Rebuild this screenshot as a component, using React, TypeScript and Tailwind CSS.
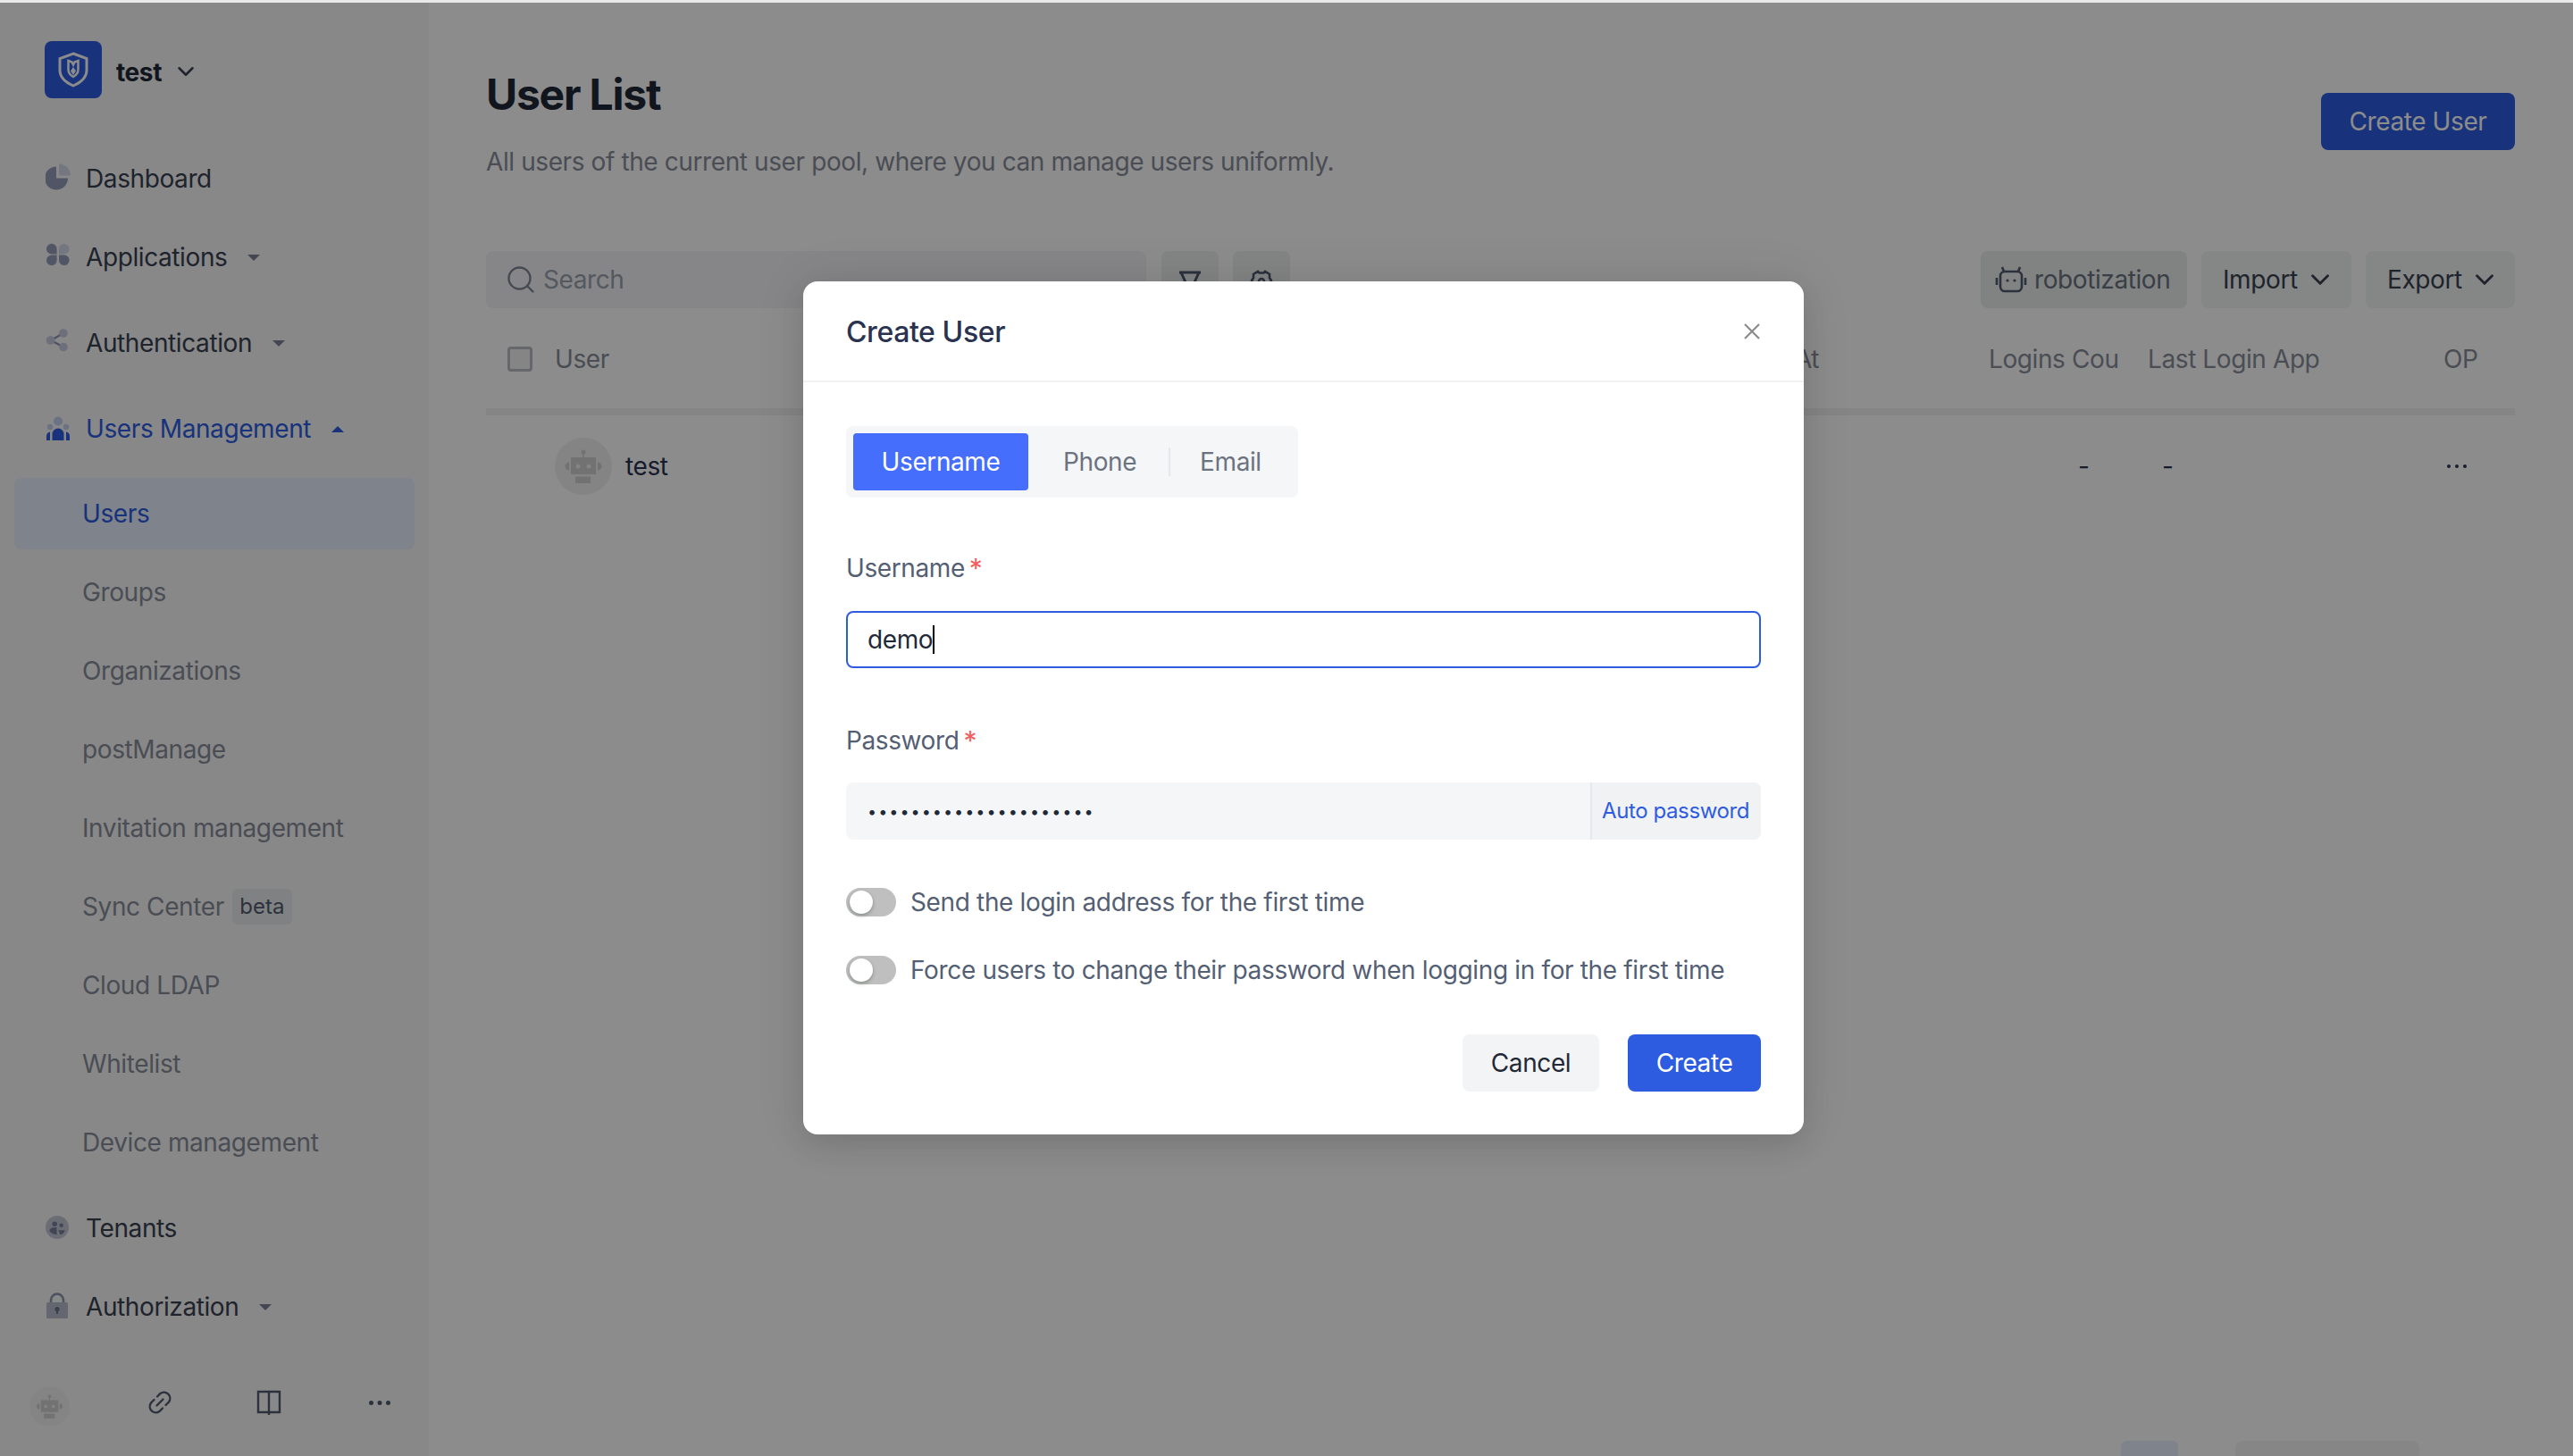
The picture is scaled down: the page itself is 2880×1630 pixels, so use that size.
import { ChevronDown, Search } from 'lucide-react';
import type { ReactNode } from 'react';

const Caret = ({ up, color = '#6f7486' }: { up?: boolean; color?: string }) => (
    <svg width="14" height="7" viewBox="0 0 14 7" className="ml-[23px]" fill={color}>
        <path d={up ? 'M7 0l7 7H0z' : 'M0 0h14L7 7z'} />
    </svg>
);

const PieIcon = () => (
    <svg width="28" height="30" viewBox="0 0 28 30" className="-mt-[4px]">
        <path d="M12 3.500A13 13 0 1 0 25 16.500H12z" fill="#959cb9" />
        <path d="M15 .5A13 13 0 0 1 28 13.500H15z" fill="#d3d8ea" />
    </svg>
);

const AppsIcon = () => (
    <svg width="28" height="26" viewBox="0 0 28 26" className="-mt-[6px]">
        <path d="M1 6.500a5.800 5.800 0 0 1 11.600 0v6H6.800A5.800 5.800 0 0 1 1 6.500z" fill="#959cb9" />
        <path d="M15 6.500a5.800 5.800 0 1 1 5.800 6H15z" fill="#d3d8ea" />
        <path d="M1 19.500a5.800 5.800 0 0 1 5.800-6h5.800v6a5.800 5.800 0 0 1-11.600 0z" fill="#959cb9" />
        <path d="M15 13.500h6a5.800 5.800 0 1 1-6 6z" fill="#959cb9" />
    </svg>
);

const ShareIcon = () => (
    <svg width="26" height="26" viewBox="0 0 26 26" className="-mt-[6px]">
        <path d="M6 13L20 5M6 13l14 7.500" stroke="#8f96b3" strokeWidth="2.500" />
        <circle cx="5.500" cy="13" r="4.800" fill="#c6cade" />
        <circle cx="20" cy="5" r="4.800" fill="#c6cade" />
        <circle cx="20" cy="20.500" r="4.800" fill="#c6cade" />
    </svg>
);

const UsersIcon = () => (
    <svg width="28" height="28" viewBox="0 0 28 28">
        <circle cx="14" cy="5.500" r="5" fill="#c3d0f4" />
        <circle cx="5" cy="12" r="3.200" fill="#c3d0f4" />
        <circle cx="23" cy="12" r="3.200" fill="#c3d0f4" />
        <path d="M7.500 27v-7a6.500 6.500 0 0 1 13 0v7z" fill="#2d5ce0" />
        <path d="M1 27v-5a5 5 0 0 1 4-4.500V27zM27 27v-5a5 5 0 0 0-4-4.500V27z" fill="#2d5ce0" />
    </svg>
);

const TenantIcon = () => (
    <svg width="26" height="26" viewBox="0 0 28 28" className="-mt-[2px]">
        <circle cx="14" cy="14" r="14" fill="#c4c7d6" />
        <circle cx="11" cy="10" r="3" fill="#777f9d" />
        <circle cx="19" cy="11.500" r="2.400" fill="#777f9d" />
        <path d="M4.500 18c1-3.500 6-4.500 9-3.500V23c-4-.5-7.500-2-9-5z" fill="#777f9d" />
        <path d="M15.500 17.500h8c-.5 2.500-3 5-6 5.500z" fill="#777f9d" />
    </svg>
);

const LockIcon = () => (
    <svg width="28" height="30" viewBox="1 0 28 30" className="-mt-[2px]">
        <path d="M7 12V8.500a7 7 0 0 1 14 0V12" fill="none" stroke="#8b92ad" strokeWidth="2.600" />
        <rect x="2" y="11" width="24" height="18" rx="1.500" fill="#b8bccd" />
        <circle cx="14" cy="18.500" r="2.600" fill="#6a7290" />
        <rect x="13" y="19" width="2" height="5" fill="#6a7290" />
    </svg>
);

const RobotIcon = ({ size = 64 }: { size?: number }) => (
    <svg width={size} height={size} viewBox="0 0 64 64">
        <circle cx="32" cy="32" r="32" fill="#f1f1f1" />
        <circle cx="32" cy="16" r="2.500" fill="#d0d0d0" />
        <rect x="31.200" y="17" width="1.600" height="6" fill="#d0d0d0" />
        <rect x="18" y="22" width="28" height="19" fill="#d0d0d0" />
        <rect x="23" y="43.500" width="17" height="7.500" fill="#d0d0d0" />
        <path d="M16 27.500v9a4.500 4.500 0 0 1 0-9zM48 27.500v9a4.500 4.500 0 0 0 0-9z" fill="#d0d0d0" />
        <circle cx="26" cy="32" r="2.500" fill="#f1f1f1" />
        <circle cx="38" cy="32" r="2.500" fill="#f1f1f1" />
    </svg>
);

const LinkIcon = () => (
    <svg width="28" height="28" viewBox="0 0 28 28" fill="none" stroke="#515b70" strokeWidth="2.400" strokeLinecap="round">
        <path d="M11 7.500l3.500-3.500a6.800 6.800 0 0 1 9.500 9.500L20.500 17" />
        <path d="M17 20.500L13.500 24A6.800 6.800 0 0 1 4 14.500L7.500 11" />
        <path d="M10.500 17.500l7-7" />
    </svg>
);

const BookIcon = () => (
    <svg width="28" height="28" viewBox="0 0 28 28" fill="none" stroke="#515b70" strokeWidth="2.400">
        <path d="M2 2h24v23H2z" />
        <path d="M14 2v26" />
    </svg>
);

const Dots = ({ color = '#515b70', r = 2.500, gap = 9.500 }: { color?: string; r?: number; gap?: number }) => (
    <svg width={gap * 2 + r * 2} height={r * 2}>
        {[0, 1, 2].map((i) => (
            <circle key={i} cx={r + i * gap} cy={r} r={r} fill={color} />
        ))}
    </svg>
);

const NavItem = ({ icon, label, caret, active, className = '' }: { icon: ReactNode; label: string; caret?: boolean; active?: boolean; className?: string }) => (
    <div className={`flex h-[80px] items-center pl-[51px] ${className}`}>
        <span className="flex w-[45px] shrink-0 items-center">{icon}</span>
        <span className={active ? 'text-[#2d5ce0]' : 'text-[#374151]'}>{label}</span>
        {caret && <Caret up={active} color={active ? '#2d5ce0' : '#7c8296'} />}
    </div>
);

const SubItem = ({ label, active, children }: { label: string; active?: boolean; children?: ReactNode }) => (
    <div className={`mx-4 flex h-[80px] items-center rounded-lg pl-[76px] ${active ? 'bg-[#e7eeff] text-[#2d5ce0]' : 'text-[#878d9a]'}`}>
        {label}
        {children}
    </div>
);

const Toggle = ({ label }: { label: string }) => (
    <div className="flex h-8 items-center">
        <span className="flex h-8 w-14 items-center rounded-full bg-[#bfbfbf] pl-[4px]">
            <span className="h-[26px] w-[26px] rounded-full bg-white shadow-[0_2px_4px_rgba(0,35,11,0.3)]" />
        </span>
        <span className="ml-4 tracking-[-0.35px] text-[#545f74]">{label}</span>
    </div>
);

const Star = () => <span className="ml-[5px] text-[30px] text-[#f65c5c]">*</span>;

const subMenu = ['Groups', 'Organizations', 'postManage', 'Invitation management'];
const subMenu2 = ['Cloud LDAP', 'Whitelist', 'Device management'];

export default function App() {
    return (
        <div className="relative flex h-[1630px] w-[2880px] flex-col overflow-hidden bg-white font-['Inter',sans-serif] text-[28px] tracking-[-0.4px]">
            <div className="h-[3px] shrink-0 bg-[#e9e9e9]" />
            <div className="flex min-h-0 flex-1">
                {/* sidebar */}
                <aside className="flex w-[480px] shrink-0 flex-col bg-[#f8f8f8]">
                    <div className="flex h-[64px] items-center pl-[50px] mt-[43px]">
                        <span className="flex h-[64px] w-[64px] items-center justify-center rounded-lg bg-[#2d5ce0]">
                            <svg width="36" height="40" viewBox="0 0 36 40" fill="none">
                                <path d="M18 2l15 5.500v13c0 8-7 14-15 17.500C10 34.500 3 28.500 3 20.500v-13z" stroke="#fff" strokeWidth="3" />
                                <path d="M12.500 10l4 1.500 1.500 3 1.500-3 4-1.500v10c0 4-3 6.500-5.500 8-2.500-1.500-5.500-4-5.500-8z" stroke="#fff" strokeWidth="2.500" />
                                <path d="M18 17l3 4.500-3 4.500-3-4.500z" fill="#fff" />
                            </svg>
                        </span>
                        <span className="ml-4 mt-[6px] font-bold text-[#1f2937]">test</span>
                        <ChevronDown size={30} strokeWidth={2} className="ml-[12px] mt-[4px] text-[#374151]" />
                    </div>
                    <NavItem className="mt-[50px]" icon={<PieIcon />} label="Dashboard" />
                    <NavItem className="mt-2" icon={<AppsIcon />} label="Applications" caret />
                    <NavItem className="mt-4" icon={<ShareIcon />} label="Authentication" caret />
                    <NavItem className="mt-4" icon={<UsersIcon />} label="Users Management" caret active />
                    <div className="mt-[15px] flex flex-col gap-2">
                        <SubItem label="Users" active />
                        {subMenu.map((item) => (
                            <SubItem key={item} label={item} />
                        ))}
                        <SubItem label="Sync Center">
                            <span className="ml-[9px] flex h-10 w-[67px] items-center justify-center rounded-md bg-[#eaebee] text-[24px] tracking-normal text-[#515b70]">beta</span>
                        </SubItem>
                        {subMenu2.map((item) => (
                            <SubItem key={item} label={item} />
                        ))}
                    </div>
                    <NavItem className="mt-4" icon={<TenantIcon />} label="Tenants" />
                    <NavItem className="mt-2" icon={<LockIcon />} label="Authorization" caret />
                    <div className="mt-[43px] flex h-[48px] items-center pl-[33px]">
                        <span className="mt-2"><RobotIcon size={45} /></span>
                        <span className="ml-[87px]"><LinkIcon /></span>
                        <span className="ml-[94px]"><BookIcon /></span>
                        <span className="ml-[98px]"><Dots /></span>
                    </div>
                </aside>

                {/* main */}
                <main className="flex min-w-0 flex-1 flex-col pl-16 pr-[65px] pt-[73px]">
                    <div className="flex items-start justify-between">
                        <div>
                            <h1 className="text-[48px] leading-[60px] font-bold tracking-[-1.2px] text-[#1f2937]">User List</h1>
                            <p className="mt-[25px] leading-[40px] text-[#878d9a]">All users of the current user pool, where you can manage users uniformly.</p>
                        </div>
                        <button className="mt-[28px] flex h-[64px] w-[217px] items-center justify-center rounded-lg bg-[#2d5ce0] text-white">Create User</button>
                    </div>

                    <div className="mt-[80px] flex h-[64px] gap-4">
                        <div className="mr-px flex w-[739px] items-center rounded-lg bg-[#f5f5f7] pl-[21px] text-[#9aa0ad]">
                            <Search size={36} strokeWidth={1.600} className="text-[#7f8696]" />
                            <span className="ml-[7px]">Search</span>
                        </div>
                        <div className="flex w-[64px] justify-center rounded-lg bg-[#eef1f0] pt-[22px]">
                            <svg width="28" height="28" viewBox="0 0 28 28" fill="none" stroke="#4f5a70" strokeWidth="3">
                                <path d="M2 2h24M4 2l10 22L24 2" />
                            </svg>
                        </div>
                        <div className="flex w-[64px] justify-center rounded-lg bg-[#eef1f0] pt-[20px]">
                            <svg width="26" height="28" viewBox="0 0 26 28" fill="none" stroke="#4f5a70" strokeWidth="2.600">
                                <path d="M9 3l1.500 1.500h5L17 3l5 3v4l2 3-2 4v4l-5 3h-8l-5-3v-4l-2-4 2-3V6z" />
                                <circle cx="13" cy="14" r="3" />
                            </svg>
                        </div>
                        <div className="ml-auto flex w-[231px] items-center rounded-lg bg-[#e9eeec] pl-[16px] text-[#6b7280]">
                            <svg width="36" height="30" viewBox="0 0 36 30" fill="none" stroke="#515b70" strokeWidth="2.600">
                                <rect x="6" y="6" width="24" height="22" rx="5" />
                                <path d="M10 6L8 1M26 6l2-5M2 13v8M34 13v8" />
                                <circle cx="14" cy="16" r="1.600" fill="#515b70" stroke="none" />
                                <circle cx="22" cy="16" r="1.600" fill="#515b70" stroke="none" />
                            </svg>
                            <span className="ml-[8px]">robotization</span>
                        </div>
                        <div className="flex w-[168px] items-center rounded-lg bg-[#f3f4f5] pl-[24px] text-[#374151]">
                            Import
                            <ChevronDown size={34} strokeWidth={2} className="ml-[8px] shrink-0" />
                        </div>
                        <div className="flex w-[167px] items-center rounded-lg bg-[#f3f4f5] pl-[24px] text-[#374151]">
                            Export
                            <ChevronDown size={34} strokeWidth={2} className="ml-[8px] shrink-0" />
                        </div>
                    </div>

                    <div className="grid h-[112px] grid-cols-[77px_1274px_331px_178px_331px_1fr] items-center pt-[2px] text-[#878d9a]">
                        <span className="ml-6 h-[28px] w-[28px] rounded-[4px] border-[3px] border-[#b9bcc4] bg-[#f3f3f3]" />
                        <span>User</span>
                        <span className="pl-[4px]">Created At</span>
                        <span>Logins Cou</span>
                        <span>Last Login App</span>
                        <span>OP</span>
                    </div>
                    <div className="h-2 bg-[#f0f3f1]" />
                    <div className="mt-[25px] grid h-[64px] grid-cols-[77px_1274px_331px_178px_331px_1fr] items-center text-[#293350]">
                        <span />
                        <span className="flex items-center">
                            <RobotIcon />
                            <span className="ml-[15px]">test</span>
                        </span>
                        <span />
                        <span className="pl-[100px]">-</span>
                        <span className="pl-[16px]">-</span>
                        <span className="pl-[4px]"><Dots color="#293350" r={2} gap={9} /></span>
                    </div>

                    <div className="mt-auto flex h-[17px] justify-end gap-16 pr-[107px]">
                        <span className="w-16 rounded-t-md bg-[#e7eeff]" />
                        <span className="w-[206px] rounded-t-lg bg-[#f5f5f5]" />
                    </div>
                </main>
            </div>

            {/* modal */}
            <div className="absolute inset-x-0 bottom-0 top-[3px] bg-black/45 pl-[899px] pt-[312px]">
                <div className="w-[1120px] rounded-2xl bg-white shadow-[0_0_60px_rgba(0,0,0,0.08),0_12px_32px_rgba(0,0,0,0.1)]">
                    <div className="flex h-[113px] items-center justify-between border-b-2 border-[#f0f1f3] pl-12 pr-[49px]">
                        <h2 className="pt-[2px] text-[32px] font-medium text-[#293350]">Create User</h2>
                        <svg width="18" height="18" viewBox="0 0 18 18" stroke="#8c8c8c" strokeWidth="2.200">
                            <path d="M1 1l16 16M17 1L1 17" />
                        </svg>
                    </div>
                    <div className="flex flex-col px-12 pb-12 pt-[49px]">
                        <div className="flex h-[80px] w-[506px] items-center rounded-lg bg-[#f5f6f8] px-2 text-[#6b7280]">
                            <span className="flex h-[64px] w-[196px] items-center justify-center rounded bg-[#456efc] text-white">Username</span>
                            <span className="ml-[39px]">Phone</span>
                            <span className="ml-[36px] h-8 w-[2px] bg-[#e5e7eb]" />
                            <span className="ml-[33px]">Email</span>
                        </div>

                        <label className="mt-[59px] flex h-10 items-center text-[#545f74]">Username<Star /></label>
                        <div className="mt-[28px] flex h-[64px] items-center rounded-lg border-2 border-[#2d5ce0] pl-[22px] text-[#1f2937]">
                            demo
                            <span className="h-8 w-[2px] bg-black" />
                        </div>

                        <label className="mt-[61px] flex h-10 items-center text-[#545f74]">Password<Star /></label>
                        <div className="mt-[27px] flex h-[64px] items-stretch overflow-hidden rounded-lg bg-[#f5f6f8]">
                            <span className="flex flex-1 items-center pl-6 text-[18px] tracking-[2px] text-[#1f2937]">•••••••••••••••••••••</span>
                            <span className="flex w-[191px] items-center border-l-2 border-[#e5e7eb] bg-[#f1f2f4] pl-[11px] text-[24px] text-[#2d5ce0]">Auto password</span>
                        </div>

                        <div className="mt-[54px] flex flex-col gap-[44px]">
                            <Toggle label="Send the login address for the first time" />
                            <Toggle label="Force users to change their password when logging in for the first time" />
                        </div>

                        <div className="mt-[56px] flex justify-end gap-8">
                            <button className="h-[64px] w-[153px] rounded-lg bg-[#f3f4f6] text-[#1f2937]">Cancel</button>
                            <button className="h-[64px] w-[149px] rounded-lg bg-[#2d5ce0] text-white">Create</button>
                        </div>
                    </div>
                </div>
            </div>
        </div>
    );
}
